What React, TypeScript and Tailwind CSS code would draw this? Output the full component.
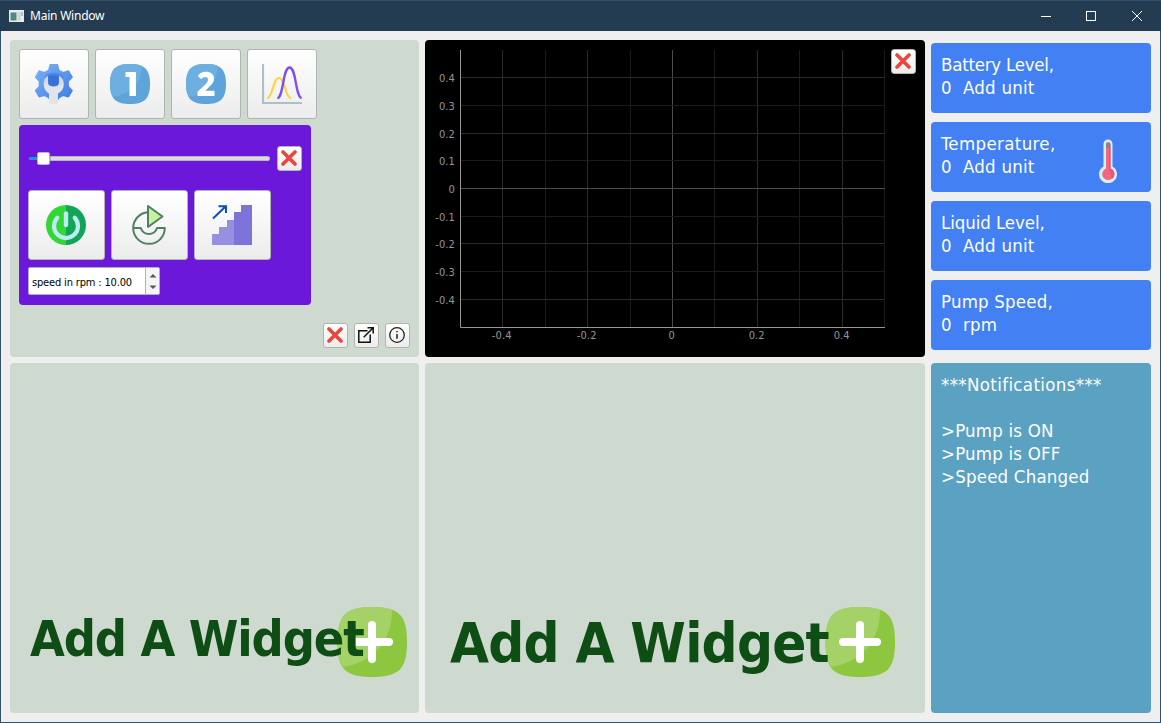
import type { ReactNode } from "react";

const UI = "font-['DejaVu_Sans_Condensed','DejaVu_Sans',sans-serif] [font-stretch:condensed]";

function GearIcon() {
  return (
    <svg width="40" height="40" viewBox="0 0 40 40">
      <defs>
        <linearGradient id="gear" x1="0" y1="0" x2="1" y2="1">
          <stop offset="0" stopColor="#7db0f4" />
          <stop offset="1" stopColor="#3f7de6" />
        </linearGradient>
        <linearGradient id="wrench" x1="0" y1="0" x2="0" y2="1">
          <stop offset="0" stopColor="#c9cfe2" />
          <stop offset="0.400" stopColor="#e2e4ec" />
          <stop offset="1" stopColor="#e2e2e8" />
        </linearGradient>
      </defs>
      <path
        d="M16.200 .9H23.400L24.800 6.400L29.100 8.700L34.400 7.100L38 13.200L34.100 17.200V22.600L38 26.600L34.400 32.700L29.100 31.200L24.800 33.500L23.400 36H16.200L14.800 33.500L10.500 31.200L5.200 32.700L1.700 26.600L5.500 22.600V17.200L1.700 13.200L5.200 7.100L10.500 8.700L14.800 6.400Z"
        fill="url(#gear)"
        stroke="url(#gear)"
        strokeWidth="1.600"
        strokeLinejoin="round"
      />
      <path d="M10.500 12.500C15 7.500 25 7.500 29.500 12.500L25 20H15Z" fill="#4a86e6" />
      <path d="M14.500 11.500H24.500V20L20 23L14.500 20Z" fill="#3872d6" />
      <path d="M14 11.500C10.800 13.500 9.500 16.500 9.700 20.500C10 24.500 12 28 15 29.500V38.500Q15 40 16.500 40H22.500Q24 40 24 38.500V29.500C28 27.500 29.800 24.200 29.800 20.300C29.800 16.600 28.200 13.300 25 11.500V19Q25 22.500 19.500 22.500T14 19Z" fill="url(#wrench)" />
    </svg>
  );
}

function NumberIcon({ value }: { value: "1" | "2" }) {
  return (
    <svg width="40" height="40" viewBox="0 0 40 40">
      <path d="M20 0C34.500 0 40 5.500 40 20S34.500 40 20 40S0 34.500 0 20S5.500 0 20 0Z" fill="#5ea4da" />
      <path d="M20 0C25 0 29 .6 31.800 1.900C32 17 21 30.500 3 32.600C1 29.500 0 25 0 20C0 5.500 5.500 0 20 0Z" fill="#6cafe0" />
      {value === "1" ? (
        <path d="M15.500 8H26V32H19.500V13H15.500Z" fill="#fff" />
      ) : (
        <path
          d="M11.800 12C13 9.500 16 7.700 19.800 7.700C24.800 7.700 28 10.300 28 14.500C28 17.500 26.800 19.500 23.800 22.300L19.300 26.700H28.500V32H11.500V27.800L19.500 20.200C21.300 18.400 22 17 22 15.500C22 13.700 21 12.900 19.200 12.900C17.600 12.900 16.300 13.600 15.300 15.200Z"
          fill="#fff"
        />
      )}
    </svg>
  );
}

function CurvesIcon() {
  return (
    <svg width="40" height="40" viewBox="0 0 40 40" fill="none">
      <path d="M1 0V39H40" stroke="#b0bec5" strokeWidth="2.200" />
      <path d="M5 34.300C11 33.500 11 14 17 14S23 33.500 29 34.300" stroke="#fdd444" strokeWidth="2.200" />
      <path d="M15.500 34.300C22 32 20.500 3.500 27.500 3.500S33 31.500 39.500 34.300" stroke="#7c4ff0" strokeWidth="2.300" />
    </svg>
  );
}

function PowerIcon() {
  return (
    <svg width="40" height="40" viewBox="0 0 40 40">
      <path d="M20 0A20 20 0 0 0 20 40Z" fill="#32d736" />
      <path d="M20 0A20 20 0 0 1 20 40Z" fill="#12a558" />
      <path d="M11.300 12.800A12 12 0 1 0 28.700 12.800" fill="none" stroke="#bdeaf3" strokeWidth="4.200" strokeLinecap="round" />
      <path d="M20 8.500V20" stroke="#bdeaf3" strokeWidth="4.400" strokeLinecap="round" />
    </svg>
  );
}

function ResumeIcon() {
  return (
    <svg width="40" height="40" viewBox="0 0 40 40" fill="none" stroke="#4f8060" strokeWidth="2" strokeLinejoin="round">
      <path d="M19 7.300A15.800 15.800 0 1 0 35.800 23H28A8.500 8.500 0 0 1 11.800 23H4" />
      <path d="M19 1L33.500 11.500L19 22Z" fill="#c5f1a0" />
    </svg>
  );
}

function StairsIcon() {
  return (
    <svg width="40" height="40" viewBox="0 0 40 40">
      <path d="M0 40V29H7V22H15V15H22V7H29V0H40V40Z" fill="#7c74d8" />
      <path d="M0 40V29H7V22H15V15H22V40Z" fill="#9790e1" />
      <path d="M1 13.500L13.500 1.500M6.500 1.200H14V8" fill="none" stroke="#0a50b8" strokeWidth="2" />
    </svg>
  );
}

function CrossIcon() {
  return (
    <svg className="mr-px mb-px" width="16" height="16" viewBox="0 0 16 16">
      <path d="M2 2L14 14M14 2L2 14" stroke="#eb463c" strokeWidth="3.600" strokeLinecap="round" />
    </svg>
  );
}

function ExternalIcon() {
  return (
    <svg className="mr-px mb-px" width="16" height="16" viewBox="0 0 16 16" fill="none" stroke="#111" strokeWidth="1.500">
      <path d="M9.500 3.800H.8V15.200H12.200V7.500M5.700 10.300L15 1M9.500 .8H15.200V6.500" />
    </svg>
  );
}

function InfoIcon() {
  return (
    <svg className="mr-px mb-px" width="16" height="16" viewBox="0 0 16 16" fill="none" stroke="#222" strokeWidth="1.300">
      <circle cx="8" cy="8" r="7.300" />
      <path d="M8 7V11.800" strokeWidth="1.500" />
      <circle cx="8" cy="4.800" r=".4" fill="#222" strokeWidth="1" />
    </svg>
  );
}

function ThermometerIcon() {
  return (
    <svg width="18" height="44" viewBox="0 0 18 44">
      <path d="M4.500 5A4.500 4.500 0 0 1 13.500 5V27.500A9 9 0 1 1 4.500 27.500Z" fill="#dcecf8" />
      <path d="M7 5.500A2 2 0 0 1 11.500 5.500V29.500A6 6 0 1 1 7 29.500Z" fill="#f2667f" />
      <path d="M7 5.500A2 2 0 0 1 11.500 5.500V9H7Z" fill="#8d8088" />
      <path d="M10 9V29.500L13 40A6 6 0 0 0 11.500 29.500V9Z" fill="#e05a77" />
    </svg>
  );
}

function PlusIcon() {
  return (
    <svg width="70" height="70" viewBox="0 0 70 70">
      <path d="M35 0C62 0 70 8 70 35S62 70 35 70S.5 62 .5 35S9 0 35 0Z" fill="#8dc63f" />
      <path d="M35 0C43.500 0 50 .8 55 2.700C56 32 36 56 5.200 60C1.800 54.500 .5 46 .5 35C.5 8 9 0 35 0Z" fill="#a4d267" />
      <path d="M35 18V52M18 35H52" stroke="#fff" strokeWidth="8" strokeLinecap="round" />
    </svg>
  );
}

function Button({ size, children }: { size: string; children: ReactNode }) {
  return (
    <button
      className={`flex shrink-0 items-center justify-center rounded-[3px] border border-[#b2b4b2] bg-linear-to-b from-white to-[#ececec] ${size}`}
    >
      {children}
    </button>
  );
}

const TOOL = "size-[70px]";
const WIDE = "h-[70px] w-[77px] pr-px";
const SMALL = "size-[25px]";

function TitleBar() {
  return (
    <header className="flex h-[31px] shrink-0 items-center border-t border-[#33506a] bg-[#243c51] pl-[9px] text-white">
      <svg className="mb-px" width="15" height="12" viewBox="0 0 15 12">
        <rect width="15" height="12" fill="#e8ecec" />
        <rect x="1.500" y="2.500" width="6" height="8" fill="#4d8a80" />
        <rect x="8.500" y="2" width="3" height="8.500" fill="#d0d4d8" />
        <rect x="12" y="2" width="2" height="4" fill="#b5bcc4" />
      </svg>
      <h1 className="ml-[6px] flex-1 font-['Noto_Sans',sans-serif] text-[12px] leading-4 tracking-[-0.22px]">Main Window</h1>
      <svg className="mr-[18px] mb-px" width="102" height="12" viewBox="0 0 102 12" fill="none" stroke="#fff">
        <path d="M0 6.500H10" />
        <rect x="45.500" y="1.500" width="9" height="9" />
        <path d="M91 1L101 11M101 1L91 11" />
      </svg>
    </header>
  );
}

function PumpControls() {
  return (
    <section className="mt-[6px] h-[180px] w-[292px] rounded-[4px] bg-[#6c18da] px-[9px] pt-[21px]">
      <div className="flex items-center">
        <div className="flex h-[13px] w-[242px] items-center pl-px">
          <div className="h-[3px] w-[8px] bg-[#1e90dc]" />
          <div className="size-[13px] rounded-[2px] border border-[#b8b8c4] bg-white" />
          <div className="h-[5px] flex-1 rounded-r-[2px] border border-[#b9b4c4] bg-[#dcdcdc]" />
        </div>
        <div className="ml-[7px]">
          <Button size={SMALL}><CrossIcon /></Button>
        </div>
      </div>
      <div className="mt-[19px] flex gap-[6px]">
        <Button size={WIDE}><PowerIcon /></Button>
        <Button size={WIDE}><ResumeIcon /></Button>
        <Button size={WIDE}><StairsIcon /></Button>
      </div>
      <div className="mt-[7px] flex h-[28px] w-[132px] overflow-hidden rounded-[2px] border border-[#b0aeb8] bg-white">
        <span className={`flex-1 pt-[8px] pl-[3px] text-[11px] leading-[14px] tracking-[-0.16px] whitespace-pre text-black ${UI}`}>
          speed in rpm : 10.00
        </span>
        <span className="flex w-[14px] shrink-0 flex-col items-center justify-center border-l border-[#b4b4b4] bg-[#f4f4f4]">
          <svg width="8" height="17" viewBox="0 0 8 17" fill="#565656">
            <path d="M0.500 4.500L4 1L7.500 4.500ZM0.500 12.500L4 16L7.500 12.500Z" />
          </svg>
        </span>
      </div>
    </section>
  );
}

const columns = [
  { x: 77, label: "-0.4" },
  { x: 120 },
  { x: 162, label: "-0.2" },
  { x: 205 },
  { x: 247, label: "0" },
  { x: 289 },
  { x: 332, label: "0.2" },
  { x: 374 },
  { x: 417, label: "0.4" },
  { x: 459 },
];
const rows = [
  { y: 37, label: "0.4" },
  { y: 65, label: "0.3" },
  { y: 93, label: "0.2" },
  { y: 120, label: "0.1" },
  { y: 148, label: "0" },
  { y: 176, label: "-0.1" },
  { y: 203, label: "-0.2" },
  { y: 231, label: "-0.3" },
  { y: 259, label: "-0.4" },
];

function Plot() {
  return (
    <section className="relative overflow-hidden rounded-[4px] bg-black">
      <svg className={`block text-[11px] tracking-[0.1px] ${UI}`} width="500" height="317" viewBox="0 0 500 317" fill="#969696">
        {columns.map((c) => (
          <g key={c.x}>
            <path d={`M${c.x + 0.5} 10V287`} stroke={c.label === "0" ? "#4c4c4c" : c.label ? "#2b2b2b" : "#1b1b1b"} />
            {c.label && <text x={c.x - 0.3} y="299" textAnchor="middle">{c.label}</text>}
          </g>
        ))}
        {rows.map((r, i) => (
          <g key={r.y}>
            <path d={`M35 ${r.y + 0.5}H460`} stroke={i === 4 ? "#4c4c4c" : i % 2 ? "#1b1b1b" : "#2b2b2b"} />
            <text x="30" y={r.y + 5} textAnchor="end">{r.label}</text>
          </g>
        ))}
        <path d="M35.500 10V287.500H460" fill="none" stroke="#969696" />
      </svg>
      <div className="absolute top-[9px] right-[9px]">
        <Button size={SMALL}><CrossIcon /></Button>
      </div>
    </section>
  );
}

function Reading({ name, value, icon, tracking = "tracking-[0.2px]" }: { name: string; value: string; icon?: ReactNode; tracking?: string }) {
  return (
    <div className={`flex h-[70px] justify-between rounded-[4px] bg-[#4280f4] pt-[10px] pr-[34px] pl-[10px] text-[18.500px] leading-[23px] whitespace-pre text-white ${UI}`}>
      <div>
        <p className={tracking}>{name}</p>
        <p className="tracking-[0.25px]">{value}</p>
      </div>
      {icon && <div className="pt-[7px]">{icon}</div>}
    </div>
  );
}

function AddWidget({ textClass, iconClass }: { textClass: string; iconClass: string }) {
  return (
    <section className="relative flex items-end rounded-[4px] bg-[#ced9cf]">
      <span className={`absolute z-10 leading-none font-bold whitespace-pre text-[#0e4e14] ${UI} ${textClass}`}>Add A Widget</span>
      <div className={`ml-auto pb-[36px] ${iconClass}`}>
        <PlusIcon />
      </div>
    </section>
  );
}

export default function App() {
  return (
    <div className="flex h-[723px] w-[1161px] flex-col overflow-hidden bg-[#efefef]">
      <TitleBar />
      <main className="grid flex-1 grid-cols-[409px_500px_220px] grid-rows-[317px_350px] gap-[6px] border-x border-b border-[#33506a] pt-[9px] pl-[9px]">
        <section className="flex flex-col rounded-[4px] bg-[#ced9cf] p-[9px]">
          <div className="flex gap-[6px]">
            <Button size={TOOL}><GearIcon /></Button>
            <Button size={TOOL}><NumberIcon value="1" /></Button>
            <Button size={TOOL}><NumberIcon value="2" /></Button>
            <Button size={TOOL}><CurvesIcon /></Button>
          </div>
          <PumpControls />
          <div className="mt-auto flex justify-end gap-[6px]">
            <Button size={SMALL}><CrossIcon /></Button>
            <Button size={SMALL}><ExternalIcon /></Button>
            <Button size={SMALL}><InfoIcon /></Button>
          </div>
        </section>
        <Plot />
        <aside className="flex flex-col gap-[9px] pt-[3px]">
          <Reading name="Battery Level," value="0  Add unit" tracking="tracking-[-0.240px]" />
          <Reading name="Temperature," value="0  Add unit" icon={<ThermometerIcon />} tracking="tracking-[0.35px]" />
          <Reading name="Liquid Level," value="0  Add unit" tracking="tracking-[-0.08px]" />
          <Reading name="Pump Speed," value="0  rpm" />
        </aside>
        <AddWidget textClass="top-[251px] left-[20px] text-[50px] tracking-[-1.1px]" iconClass="pr-[12px]" />
        <AddWidget textClass="top-[252px] left-[25px] text-[56px] tracking-[-0.8px]" iconClass="pr-[30px]" />
        <section className={`rounded-[4px] bg-[#5ba1c2] pt-[10px] pl-[10px] text-[18.500px] leading-[23px] tracking-[0.2px] whitespace-pre text-white ${UI}`}>
          <p className="tracking-[0.35px]">***Notifications***</p>
          <ul className="mt-[23px]">
            <li>&gt;Pump is ON</li>
            <li>&gt;Pump is OFF</li>
            <li>&gt;Speed Changed</li>
          </ul>
        </section>
      </main>
    </div>
  );
}
